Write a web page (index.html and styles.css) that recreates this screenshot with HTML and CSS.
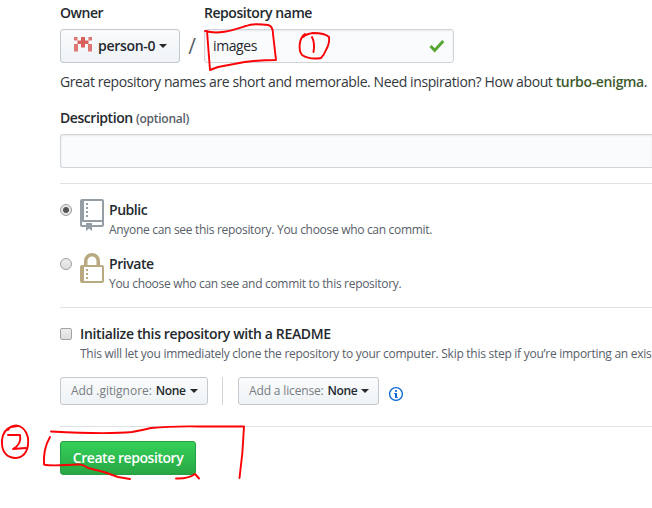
FILE: index.html
```html
<!DOCTYPE html>
<html lang="en">
<head>
<meta charset="utf-8">
<title>Create a new repository</title>
<link rel="stylesheet" href="styles.css">
</head>
<body>
<form class="form">
  <div class="names">
    <div class="owner">
      <span class="label">Owner</span>
      <div class="btn owner-btn">
        <svg class="avatar" width="18" height="15" viewBox="0 0 18 15" fill="#d9605c"><path d="M7 0h4v3.500h3.500V7H11v3.500H7V7H3.500V3.500H7z"/><path d="M0 0h3.500v3.500H0zM14.500 0H18v3.500h-3.500zM0 7h4v7.500H0zM14 7h4v7.500h-4z" opacity=".85"/></svg>
        <b class="person">person-0</b><i class="caret"></i>
      </div>
    </div>
    <span class="slash">/</span>
    <div class="repo">
      <span class="label">Repository name</span>
      <div class="input name-input"><span>images</span>
        <svg width="16" height="14" viewBox="0 0 16 14"><path d="M1.500 7l4.200 4.400L14.300 2" fill="none" stroke="#55a532" stroke-width="3"/></svg>
      </div>
    </div>
  </div>
  <p class="hint"><span>Great repository names are short and memorable. Need inspiration? How about <b>turbo-enigma</b>.</span></p>
  <div class="label">Description <small>(optional)</small></div>
  <div class="input desc-input"></div>
  <div class="choices">
    <div class="choice">
      <i class="radio checked"></i>
      <svg width="24" height="32" viewBox="0 0 24 32" fill="#959da5"><path fill-rule="evenodd" d="M2 0h20a2 2 0 0 1 2 2v24a2 2 0 0 1-2 2H12v4l-3-2.500L6 32v-4H2a2 2 0 0 1-2-2V2a2 2 0 0 1 2-2zM4 2v19h18V2zM2 23v3h4v-2h6v2h10v-3zM6 4h2v2H6zM6 8h2v2H6zM6 12h2v2H6zM6 16h2v2H6z"/></svg>
      <div class="copy"><b>Public</b><span>Anyone can see this repository. You choose who can commit.</span></div>
    </div>
    <div class="choice">
      <i class="radio"></i>
      <svg width="24" height="32" viewBox="0 0 24 32" fill="#b9a980"><path fill-rule="evenodd" d="M2 12h2V8a8 8 0 0 1 16 0v4h2a2 2 0 0 1 2 2v14a2 2 0 0 1-2 2H2a2 2 0 0 1-2-2V14a2 2 0 0 1 2-2zM7.500 12h9V8a4.500 4.500 0 0 0-9 0zM4 14v14h18V14zM6 16h2v2H6zM6 20h2v2H6zM6 24h2v2H6z"/></svg>
      <div class="copy"><b>Private</b><span>You choose who can see and commit to this repository.</span></div>
    </div>
  </div>
  <div class="init">
    <div class="init-row">
      <i class="checkbox"></i>
      <div class="copy"><b>Initialize this repository with a README</b><span class="wide">This will let you immediately clone the repository to your computer. Skip this step if you’re importing an exis</span></div>
    </div>
    <div class="menus">
      <div class="btn small ignore"><span>Add .gitignore:</span><b>None</b><i class="caret"></i></div>
      <i class="divider"></i>
      <div class="btn small license"><span>Add a license:</span><b>None</b><i class="caret"></i></div>
      <svg class="info" width="14" height="16" viewBox="0 0 14 16" fill="#0366d6"><path fill-rule="evenodd" d="M6.3 5.69a.942.942 0 0 1-.28-.7c0-.28.09-.52.28-.7.19-.18.42-.28.7-.28.28 0 .52.09.7.28.18.19.28.42.28.7 0 .28-.09.52-.28.7a1 1 0 0 1-.7.3c-.28 0-.52-.11-.7-.3zM8 7.99c-.02-.25-.11-.48-.31-.69-.2-.19-.42-.3-.69-.31H6c-.27.02-.48.13-.69.31-.2.2-.3.44-.31.69h1v3c.02.27.11.5.31.69.2.2.42.31.69.31h1c.27 0 .48-.11.69-.31.2-.19.3-.42.31-.69H8V7.980v.01zM7 2.3c-3.14 0-5.7 2.54-5.7 5.68 0 3.14 2.56 5.7 5.7 5.7s5.7-2.55 5.7-5.7c0-3.15-2.56-5.69-5.7-5.69v.01zM7 .98c3.86 0 7 3.14 7 7s-3.14 7-7 7-7-3.12-7-7 3.14-7 7-7z"/></svg>
    </div>
  </div>
  <div class="submit"><div class="create"><b>Create repository</b></div></div>
</form>
<svg class="marks" width="652" height="508" viewBox="0 0 652 508" fill="none" stroke="#fb0207" stroke-width="1.9" stroke-linecap="round" stroke-linejoin="round">
  <path d="M205 31C219 35 233 30 246 26Q253 23 268 25Q273 26 273 34L276 60Q253 60 234 64L218 67L210 70L207 31"/>
  <path d="M305 34C299 38 298 50 302 55Q310 60 321 58Q324 55 326 50Q330 43 329 37Q325 33 313 33Q306 34 303 37"/>
  <path d="M312 37Q315 43 313.500 52"/>
  <path d="M8 430Q9 427 13 426C20 424 26 429 28 438C29 448 26 457 16 458C8 458 1 453 2 440Q3 430 11 427L18 426"/>
  <path d="M8 435H20Q22 444 13 449L26 448"/>
  <path d="M51 431.500C79 433 112 434 132 432Q143 430 151 428Q171 426 200 426.500H244Q243 453 239.500 478"/>
  <path d="M50 437Q43 449 44 464.500C54 467 69 464 80 464.500Q84 465 88 468L104 472L118 477L130 479"/>
  <path d="M176 478.500Q188 479 195 474L199 478.500"/>
</svg>
</body>
</html>
```

FILE: styles.css
```css
* { box-sizing: border-box; }
body { margin: 0; width: 652px; height: 508px; overflow: hidden; position: relative; background: #fff; color: #24292e; font: 14px/20px "Open Sans", "Noto Sans", sans-serif; letter-spacing: -.45px; }
b { font-weight: 600; }
svg { flex: none; display: block; }
i { flex: none; }
span, b, small { white-space: nowrap; }
.form { width: 652px; padding: 3px 0 0 60px; overflow: hidden; }
.names { display: flex; align-items: flex-end; }
.label { display: block; height: 26px; font-weight: 600; }
.slash { width: 24px; height: 34px; text-align: center; font-size: 21px; line-height: 34px; color: #586069; }
.btn { display: flex; align-items: center; border: 1px solid #c5c9cd; border-radius: 3px; background: linear-gradient(#fafbfc, #eff3f6); }
.owner-btn { width: 120px; height: 34px; padding-left: 13px; }
.person { letter-spacing: -.3px; }
.avatar { margin: -3px 6px 0 0; }
.caret { width: 0; border: 4px solid transparent; border-top-color: #24292e; border-bottom: 0; margin-left: 4px; }
.input { height: 34px; border: 1px solid #d1d5da; border-radius: 3px; background: #fafbfc; box-shadow: inset 0 1px 2px rgba(27,31,35,.075); }
.name-input { width: 250px; display: flex; align-items: center; justify-content: space-between; padding: 0 8px; letter-spacing: -.4px; }
.hint { margin: 9px 0 16px; height: 20px; letter-spacing: -.4px; color: #33383d; }
.hint b { color: #3c5a2d; letter-spacing: -.35px; }
.desc-input { border-right: 0; border-radius: 3px 0 0 3px; }
small { font-size: 12px; color: #586069; font-weight: 600; letter-spacing: -.25px; }
.choices { margin-top: 15px; border-top: 1px solid #dfe2e5; height: 124px; padding-top: 15px; }
.choice { display: flex; height: 54px; }
.radio { width: 12px; height: 12px; border: 1px solid #9c9c9c; border-radius: 50%; background: linear-gradient(#eee, #ddd); margin: 5px 8px 0 0; }
.checked { background: radial-gradient(circle, #555 0 2.5px, #e6e6e6 3.5px); }
.copy { display: flex; flex-direction: column; margin-left: 5px; padding-top: 1px; }
.copy span { font-size: 12px; color: #586069; letter-spacing: -.305px; }
.copy .wide { letter-spacing: -.268px; }
.init { border-top: 1px solid #dfe2e5; height: 119px; padding-top: 16px; }
.init-row { display: flex; height: 53px; }
.init-row .copy { margin-left: 0; padding-top: 0; }
.init-row b { letter-spacing: -.36px; }
.checkbox { width: 12px; height: 12px; border: 1px solid #a3a3a3; border-radius: 2px; background: linear-gradient(#eee, #ddd); margin: 4px 8px 0 0; }
.menus { display: flex; }
.small { height: 28px; padding-left: 10px; font-size: 12px; letter-spacing: -.4px; }
.small span { color: #777c81; margin-right: 4px; letter-spacing: -.03px; }
.ignore { width: 148px; }
.license { width: 141px; }
.license span { letter-spacing: -.15px; }
.divider { width: 1px; height: 28px; background: #d1d5da; margin: 0 15px 0 14px; }
.info { margin: 9px 0 0 10px; }
.submit { border-top: 1px solid #dfe2e5; padding-top: 14px; }
.create { width: 136px; height: 34px; border: 1px solid #299f43; border-radius: 3px; background: linear-gradient(#34d058, #28a745); color: #fff; display: flex; align-items: center; justify-content: center; }
.marks { position: absolute; left: 0; top: 0; }
```
